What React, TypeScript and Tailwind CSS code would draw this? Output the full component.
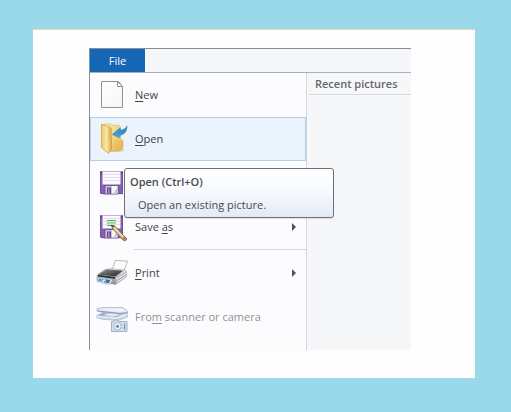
import type { ReactNode } from "react";

function NewIcon() {
  return (
    <svg viewBox="0 0 32 32" className="size-8 shrink-0" aria-hidden="true">
      <defs>
        <linearGradient id="paper" x1="0" y1="0" x2="1" y2="1">
          <stop offset="0" stopColor="#ffffff" />
          <stop offset="1" stopColor="#f4f4f6" />
        </linearGradient>
      </defs>
      <path d="M6 2.500H22.500L26.500 7.500V28.500H5.500V3Q5.500 2.500 6 2.500Z" fill="url(#paper)" stroke="#929294" />
      <path d="M21.500 2.500V7.500H26.500Z" fill="#fdfdfd" stroke="#929294" strokeLinejoin="round" />
    </svg>
  );
}

function OpenIcon() {
  return (
    <svg viewBox="0 0 32 32" className="size-8 shrink-0" aria-hidden="true">
      <defs>
        <linearGradient id="folderFront" x1="0" y1="0" x2="1" y2="0">
          <stop offset="0" stopColor="#eccb6c" />
          <stop offset=".5" stopColor="#fbe7a0" />
          <stop offset="1" stopColor="#dcaa45" />
        </linearGradient>
        <linearGradient id="folderBack" x1="0" y1="0" x2="1" y2="1">
          <stop offset="0" stopColor="#fbedb6" />
          <stop offset=".6" stopColor="#f0d27a" />
          <stop offset="1" stopColor="#dba94a" />
        </linearGradient>
        <linearGradient id="openArrow" x1="1" y1="0" x2="0" y2="1">
          <stop offset="0" stopColor="#2d7cb9" />
          <stop offset="1" stopColor="#4aa9e0" />
        </linearGradient>
      </defs>
      <ellipse cx="20" cy="27" rx="8.500" ry="2" fill="#b9a98a" opacity=".4" />
      <path d="M6 1.300 15 1 17 2.300H23L24.500 4V16.500L27 17.500V24.500L24.500 27.500 14 28.500Z" fill="url(#folderBack)" stroke="#d8b05a" strokeWidth=".6" />
      <path d="M18 16 24 17.500 26.500 18V24L24 27 17 28Z" fill="#e8bd58" opacity=".55" />
      <path d="M14.500 5 16 4.500V26L14 28Z" fill="#c99a3c" opacity=".55" />
      <path d="M5.500 1.300 13.300 4Q14.300 4.500 14.300 6L14 14.500 15.500 16 15 27.500 12.500 30.200 5.500 24.500Z" fill="url(#folderFront)" stroke="#cfa045" strokeWidth=".8" />
      <path d="M31 2.800C30.500 4.800 28.500 6.500 24.800 7.200L24 4.800 16.300 11.500 23.500 14.800 23.800 12.300C27.500 12 31.300 9 31 2.800Z" fill="url(#openArrow)" stroke="#3583bb" strokeWidth=".5" />
    </svg>
  );
}

function Floppy() {
  return (
    <>
      <path d="M4 4.500Q4 4 4.500 4H26.500L27 4.500V27H5L4 26Z" fill="#8560b4" />
      <path d="M4.500 4.500V26L5.500 26.700H26.500V4.500" fill="none" stroke="#6d4a9a" strokeWidth=".8" />
      <rect x="6.500" y="4" width="18" height="13.500" fill="#fafafc" />
      <path d="M7 4.500H24" stroke="#b9aacd" strokeWidth=".9" />
      <path d="M7 7.500H24M7 10.500H24M7 13.500H24" stroke="#dcdce4" strokeWidth=".9" />
      <path d="M5.500 5V7M25.700 5V7" stroke="#4c3568" />
      <rect x="9" y="18.500" width="13" height="8.500" fill="#c9c5d6" stroke="#65468f" strokeWidth=".8" />
      <path d="M16 19H21.500V26.500H16Z" fill="#f6f6f9" />
      <path d="M21.500 20V26.500H17.500Z" fill="#c6c6d2" />
      <rect x="11" y="20.500" width="4" height="6" fill="#65468f" />
      <rect x="12" y="21.500" width="1.500" height="4.500" fill="#a48fc4" />
    </>
  );
}

function SaveIcon() {
  return (
    <svg viewBox="0 0 32 32" className="size-8 shrink-0" aria-hidden="true">
      <Floppy />
    </svg>
  );
}

function SaveAsIcon() {
  return (
    <svg viewBox="0 0 32 32" className="size-8 shrink-0" aria-hidden="true">
      <Floppy />
      <path d="M11 9.500H20M10.500 12H20M11 14.500H19" stroke="#55b35c" strokeWidth="1.100" />
      <path d="M15 14 19.500 15.800 30.500 27.500 28 29.800 17.500 18.800Z" fill="#e9c68b" stroke="#6d563c" strokeWidth=".8" />
      <path d="M19 17 28.500 27.500" stroke="#fbe9c4" strokeWidth=".9" />
      <path d="M15 14 17.500 15.200 16.500 16.500Z" fill="#2d2a28" />
      <path d="M28.500 25.500 30.500 27.500Q31 29.500 28.500 29.800L26.500 27.800Z" fill="#b98b72" stroke="#6d563c" strokeWidth=".6" />
    </svg>
  );
}

function PrintIcon() {
  return (
    <svg viewBox="0 0 32 32" className="size-8 shrink-0" aria-hidden="true">
      <defs>
        <linearGradient id="printerLid" x1="0" y1="0" x2="1" y2="1">
          <stop offset="0" stopColor="#97999b" />
          <stop offset=".6" stopColor="#4a4c4e" />
          <stop offset="1" stopColor="#333537" />
        </linearGradient>
        <linearGradient id="printerSide" x1="0" y1="0" x2="0" y2="1">
          <stop offset="0" stopColor="#eceded" />
          <stop offset="1" stopColor="#8a8e91" />
        </linearGradient>
      </defs>
      <path d="M19.500 3.300 31.500 4.300 27.500 15 16 12.500Z" fill="#fcfcfd" stroke="#9a9c9f" strokeWidth=".7" />
      <path d="M8 13 14 11.500 28.500 13 30.500 14.500V20L19.500 27.500 14 26.500 1 23V18.500Z" fill="url(#printerSide)" stroke="#888c8f" strokeWidth=".5" />
      <path d="M10.500 12.200 27 13.800 19.500 19.500 2 17.500Z" fill="url(#printerLid)" />
      <path d="M2 17.800 19 20V21.800L2 19.600Z" fill="#2b2d2f" />
      <path d="M20 20.500 30.500 14.500V20L20.500 27Z" fill="#bfc2c4" />
      <path d="M20.500 22.500 30.500 16.500M20.500 25 30.500 18.800" stroke="#f5f6f6" strokeWidth=".9" />
      <path d="M20.500 23.800 30.500 17.700" stroke="#85898c" strokeWidth=".6" />
      <path d="M2 20.500 17 22.500 13.500 27.500 .8 24.500Z" fill="#e9eef4" stroke="#84888c" strokeWidth=".5" />
      <path d="M3 21.500 8 22.300 6.500 24.800 1.800 23.700Z" fill="#4d92d2" />
      <path d="M9 22.300 14.500 23 12.800 26.200 8 25.200Z" fill="#2e70b5" />
      <path d="M5.500 23 10 23.900" stroke="#cfe7f8" />
    </svg>
  );
}

function ScannerIcon() {
  return (
    <svg viewBox="0 0 32 32" className="size-8 shrink-0" aria-hidden="true">
      <defs>
        <linearGradient id="scannerGlass" x1="0" y1="0" x2="1" y2="0">
          <stop offset="0" stopColor="#8fa1bd" />
          <stop offset=".5" stopColor="#c6d2e2" />
          <stop offset="1" stopColor="#a3b3ca" />
        </linearGradient>
      </defs>
      <path d="M.8 14.500 6 11.500 30 11 31.500 13V16L22 19.500 8 18.500 .8 17Z" fill="#c9d5e5" stroke="#9dafc8" strokeWidth=".6" />
      <path d="M7 11.500 28 12 20 16.500 3 14.800Z" fill="url(#scannerGlass)" />
      <path d="M11 12.800 23 12.800 18.500 15.200 8 14.300Z" fill="#e3eaf2" />
      <path d="M1 15.500 20.500 17.500 31.200 13.500" fill="none" stroke="#f2f5fa" strokeWidth="1.200" />
      <path d="M1 8 6 6.500H26.500L31.500 10V12L24 12.500 1.200 10Z" fill="#dde5f0" stroke="#9dafc8" strokeWidth=".7" />
      <path d="M3 8.300 7 7.300H26L30 10.300 23 11Z" fill="#eff3f8" />
      <path d="M1.200 10 24 12.500 31.500 11.500" fill="none" stroke="#7f93b1" strokeWidth=".8" />
      <path d="M15.500 20.500H17.500L18.500 19H22L23 20.500H31V30.500H15.500Z" fill="#d3ddea" stroke="#96a9c4" strokeWidth=".9" />
      <circle cx="21.500" cy="25.300" r="3.700" fill="#f1f5fa" stroke="#8ea2bf" strokeWidth=".8" />
      <circle cx="21.500" cy="25.300" r="1.600" fill="#7489aa" />
      <path d="M28.500 22.500V28.500" stroke="#7f93b1" strokeWidth="1.200" />
    </svg>
  );
}

type MenuItemProps = {
  icon: ReactNode;
  children?: ReactNode;
  label?: string;
  submenu?: boolean;
  active?: boolean;
  disabled?: boolean;
  describedBy?: string;
};

function MenuItem({ icon, children, label, submenu, active, disabled, describedBy }: MenuItemProps) {
  return (
    <button
      type="button"
      disabled={disabled}
      aria-label={label}
      aria-haspopup={submenu ? "menu" : undefined}
      aria-describedby={describedBy}
      className={`flex h-11 w-full items-center gap-[7px] border pr-2 pl-[5px] text-left ${
        active ? "border-[#b3cfe6] bg-[#ebf3fc]" : "border-transparent"
      } ${disabled ? "text-[#8f9194]" : "text-[#414245]"}`}
    >
      {icon}
      <span className="flex-1">{children}</span>
      {submenu && (
        <svg viewBox="0 0 6 8" className="h-2 w-[6px]" aria-hidden="true">
          <path d="M1 0 5 4 1 8Z" fill="#4b5361" />
        </svg>
      )}
    </button>
  );
}

function Key({ children }: { children: ReactNode }) {
  return <span className="underline decoration-1 underline-offset-2">{children}</span>;
}

export default function App() {
  return (
    <div className="flex min-h-screen bg-[#9ad9e9] pt-[29px] pr-9 pb-[34px] pl-[33px] font-['Open_Sans','Noto_Sans',sans-serif] text-[11px] leading-4">
      <main className="flex flex-1 border-t border-[#dfdca8] bg-[#fefefe] pt-[18px] pr-16 pb-7 pl-14">
        <section className="flex flex-1 flex-col border-t border-l border-[#858f9f] bg-[#f6f7f9]">
          <header className="flex h-6 border-b border-[#a3b0c2]">
            <button type="button" className="w-[55px] bg-[#1567b3] text-white">
              File
            </button>
          </header>
          <div className="flex flex-1">
            <nav aria-label="File" className="w-[217px] shrink-0 border-r border-[#d3d7dd] bg-[#fcfcfe]">
              <ul>
                <li>
                  <MenuItem icon={<NewIcon />}>
                    <Key>N</Key>ew
                  </MenuItem>
                </li>
                <li className="relative">
                  <MenuItem icon={<OpenIcon />} active describedBy="open-tip">
                    <Key>O</Key>pen
                  </MenuItem>
                  <div
                    id="open-tip"
                    role="tooltip"
                    className="absolute top-[51px] left-[34px] z-10 w-[210px] rounded-[3px] border border-[#6d6f74] bg-linear-to-b from-white via-[#f6f9fd] to-[#e3eaf6] px-[5px] pt-[5px] pb-1 text-[#4a4b4e] shadow-[0_1px_1px_rgba(0,0,0,0.10)]"
                  >
                    <p className="font-semibold">Open (Ctrl+O)</p>
                    <p className="mt-[7px] pl-2">Open an existing picture.</p>
                  </div>
                </li>
                <li>
                  <MenuItem icon={<SaveIcon />} label="Save" />
                </li>
                <li>
                  <MenuItem icon={<SaveAsIcon />} submenu>
                    Save <Key>a</Key>s
                  </MenuItem>
                </li>
                <li role="separator" className="mb-px ml-11 border-t border-[#d3d6dc]" />
                <li>
                  <MenuItem icon={<PrintIcon />} submenu>
                    <Key>P</Key>rint
                  </MenuItem>
                </li>
                <li>
                  <MenuItem icon={<ScannerIcon />} disabled>
                    Fro<Key>m</Key> scanner or camera
                  </MenuItem>
                </li>
              </ul>
            </nav>
            <aside className="flex-1 pl-[2px]">
              <h2 className="border-b border-[#d8dade] pt-[3px] pb-[2px] pl-[6px] font-semibold text-[#66676a]">
                Recent pictures
              </h2>
            </aside>
          </div>
        </section>
      </main>
    </div>
  );
}
